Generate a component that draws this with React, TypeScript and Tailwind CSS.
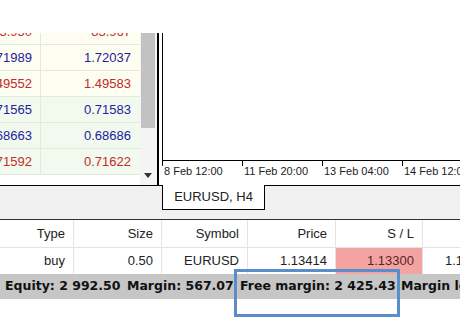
import React from 'react';

type Quote = { bid: string; ask: string; up: boolean; green: boolean };

const quotes: Quote[] = [
    { bid: '83.950', ask: '83.967', up: false, green: false },
    { bid: '1.71989', ask: '1.72037', up: true, green: false },
    { bid: '1.49552', ask: '1.49583', up: false, green: false },
    { bid: '0.71565', ask: '0.71583', up: true, green: true },
    { bid: '0.68663', ask: '0.68686', up: true, green: true },
    { bid: '0.71592', ask: '0.71622', up: false, green: true },
];

const axisLabels = ['8 Feb 12:00', '11 Feb 20:00', '13 Feb 04:00', '14 Feb 12:00'];

// Market watch, cut off at the top like the capture
const MarketWatch: React.FC = () => (
    <div className="flex h-[153px] w-[158px] border-r border-b border-black overflow-hidden">
        <div className="w-[140px] overflow-hidden">
            <div className="-mt-[14px]">
                {quotes.map((q, i) => (
                    <div
                        key={i}
                        className={`flex h-[26px] border-b border-[#e6e8dc] ${q.green ? 'bg-[#f2faef]' : 'bg-[#fdfdf1]'} ${q.up ? 'text-[#22229c]' : 'text-[#c42a2a]'}`}
                    >
                        <div className="w-[41px] flex justify-end items-center overflow-hidden whitespace-nowrap pr-[8px] border-r border-[#e6e8dc]">
                            {q.bid}
                        </div>
                        <div className="flex-1 flex justify-end items-center whitespace-nowrap pr-[9px]">{q.ask}</div>
                    </div>
                ))}
            </div>
        </div>
        {/* scrollbar */}
        <div className="w-[17px] flex flex-col bg-[#f4f4f4]">
            <div className="ml-px w-[14px] h-[95px] bg-[#c2c2c2]" />
            <div className="flex-1" />
            <div className="h-[20px] flex items-center justify-center pr-[2px]">
                <svg width="8" height="5" viewBox="0 0 8 5">
                    <path d="M0 0 H8 L4 5 Z" fill="#333" />
                </svg>
            </div>
        </div>
    </div>
);

const Chart: React.FC = () => (
    <div className="flex-1 flex flex-col">
        <div className="h-[153px] bg-white border-l border-b border-black flex flex-col">
            <div className="h-[128px] ml-[3px] border-l border-b border-black" />
            <div className="flex-1 flex ml-[3px]">
                {axisLabels.map((l) => (
                    <div key={l} className="w-[80px] shrink-0 flex items-start text-[11px] leading-[13px] text-[#222] whitespace-nowrap">
                        <div className="w-px h-[5px] bg-black" />
                        <span className="pl-px pt-[4px]">{l}</span>
                    </div>
                ))}
            </div>
        </div>
        <div className="flex-1 bg-[#f0f0f0]">
            <div className="ml-[4px] -mt-px w-[103px] h-[25px] bg-white border-l border-r border-b border-black flex items-center justify-center text-[13px] text-[#222]">
                EURUSD, H4
            </div>
        </div>
    </div>
);

const cols = [
    { name: 'Type', w: 'w-[74px]', val: 'buy' },
    { name: 'Size', w: 'w-[88px]', val: '0.50' },
    { name: 'Symbol', w: 'w-[86px]', val: 'EURUSD' },
    { name: 'Price', w: 'w-[88px]', val: '1.13414' },
    { name: 'S / L', w: 'w-[87px]', val: '1.13300' },
];

const App: React.FC = () => {
    return (
        <div className="relative w-[460px] h-[330px] overflow-hidden bg-white text-[13px] text-[#222]" style={{ fontFamily: '"Liberation Sans", Arial, sans-serif' }}>
            <div className="h-[33px] bg-white" />

            <div className="flex h-[186px]">
                <div className="w-[158px] flex flex-col">
                    <MarketWatch />
                    <div className="flex-1 bg-[#f0f0f0]" />
                </div>
                <div className="w-[4px] flex flex-col">
                    <div className="h-[152px] bg-white" />
                    <div className="flex-1 bg-[#f0f0f0]" />
                </div>
                <Chart />
            </div>

            {/* terminal */}
            <div className="border-t border-[#333]">
                <div className="flex h-[28px] border-b border-[#e4e4e4]">
                    {cols.map((c) => (
                        <div key={c.name} className={`${c.w} shrink-0 border-r border-[#e4e4e4] flex items-center justify-end pr-[8px]`}>
                            {c.name}
                        </div>
                    ))}
                    <div className="flex-1" />
                </div>
                <div className="flex h-[26px]">
                    {cols.map((c) => (
                        <div
                            key={c.name}
                            className={`${c.w} shrink-0 border-r border-[#e4e4e4] flex items-center justify-end pr-[8px] ${c.name === 'S / L' ? 'bg-[#f4a3a3] text-[#5a2424]' : ''}`}
                        >
                            {c.val}
                        </div>
                    ))}
                    <div className="flex-1 flex items-center pl-[22px] whitespace-nowrap">1.13700</div>
                </div>
                <div
                    className="h-[25px] bg-[#c6c6c6] flex items-center pl-[5px] whitespace-nowrap font-bold text-[12.5px] text-[#111]"
                    style={{ fontFamily: '"DejaVu Sans", Verdana, sans-serif' }}
                >
                    <span className="w-[122px] shrink-0">Equity: 2 992.50</span>
                    <span className="w-[113px] shrink-0">Margin: 567.07</span>
                    <span className="w-[161px] shrink-0">Free margin: 2 425.43</span>
                    <span className="shrink-0">Margin level: 527.70%</span>
                </div>
            </div>

            {/* highlight annotation */}
            <div className="absolute left-[234px] top-[269px] w-[166px] h-[48px] border-[3px] border-[#5b8dcb]" />
        </div>
    );
};

export default App;
